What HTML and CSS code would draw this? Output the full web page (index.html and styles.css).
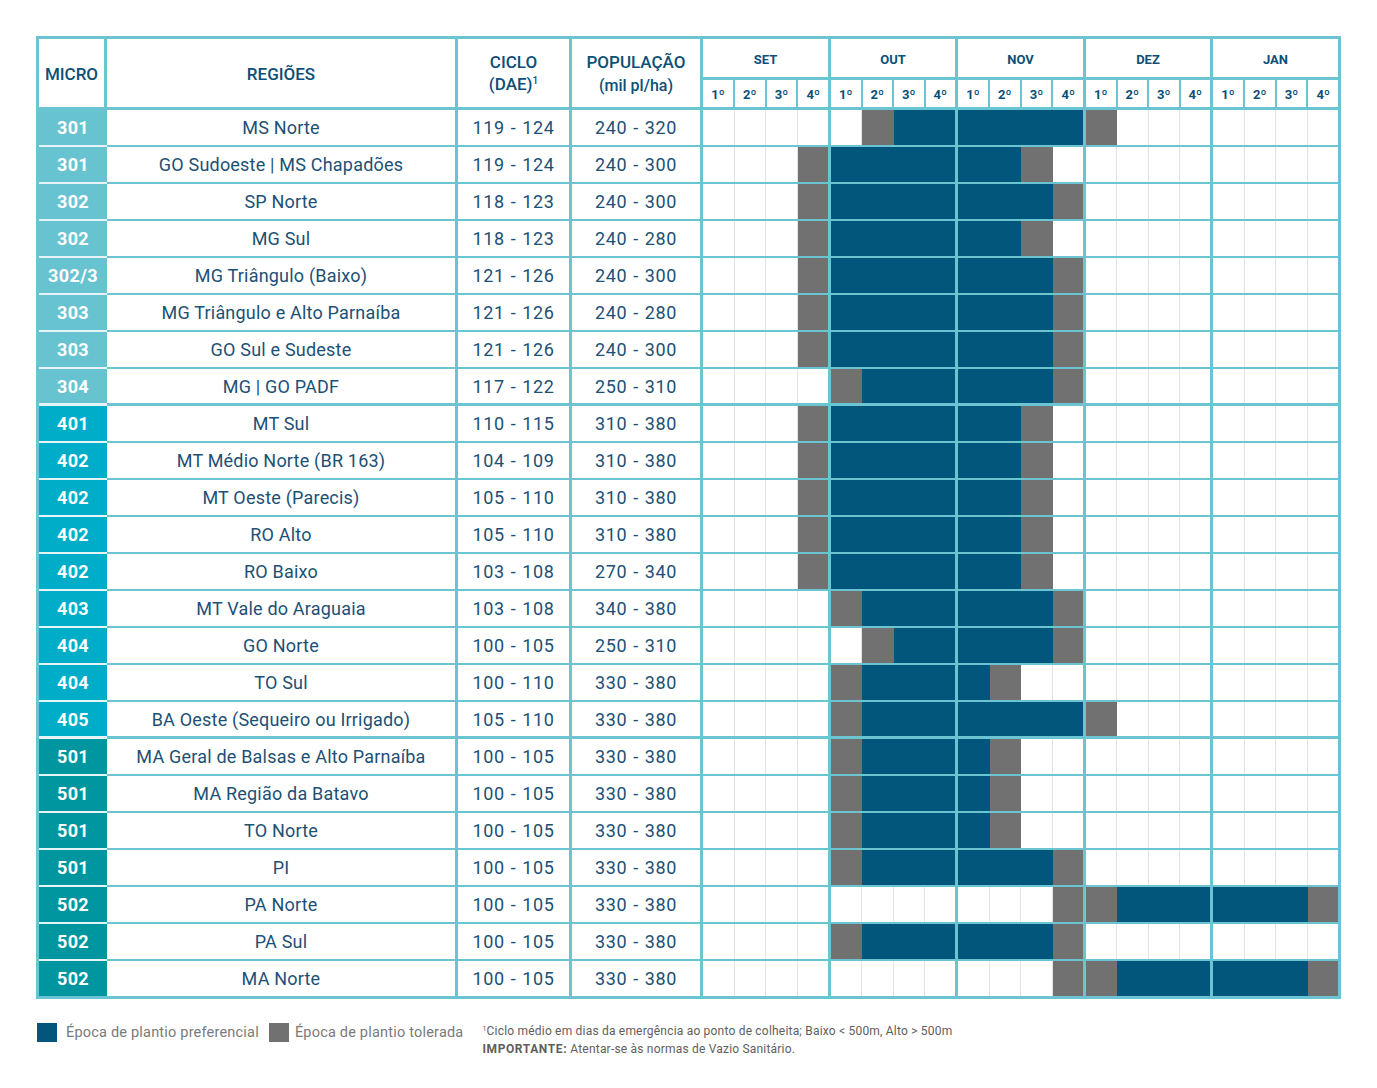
FILE: index.html
```html
<!DOCTYPE html>
<html lang="pt-BR">
<head>
<meta charset="utf-8">
<title>Época de plantio</title>
<link rel="stylesheet" href="styles.css">
</head>
<body>
<div class="page">
  <div class="tbl">
    <div class="head">
      <div class="c micro hc">MICRO</div>
      <div class="c reg hc">REGIÕES</div>
      <div class="c cic hc two"><span>CICLO</span><span>(DAE)<sup>1</sup></span></div>
      <div class="c pop hc two"><span>POPULAÇÃO</span><span class="sub">(mil pl/ha)</span></div>
      <div class="hm"><div class="mn">SET</div><div class="wk"><b>1º</b><b>2º</b><b>3º</b><b>4º</b></div></div>
      <div class="hm"><div class="mn">OUT</div><div class="wk"><b>1º</b><b>2º</b><b>3º</b><b>4º</b></div></div>
      <div class="hm"><div class="mn">NOV</div><div class="wk"><b>1º</b><b>2º</b><b>3º</b><b>4º</b></div></div>
      <div class="hm"><div class="mn">DEZ</div><div class="wk"><b>1º</b><b>2º</b><b>3º</b><b>4º</b></div></div>
      <div class="hm"><div class="mn">JAN</div><div class="wk"><b>1º</b><b>2º</b><b>3º</b><b>4º</b></div></div>
    </div>

    <div class="row g3">
      <div class="c micro">301</div><div class="c reg">MS Norte</div><div class="c cic">119 - 124</div><div class="c pop">240 - 320</div>
      <div class="m"><i></i><i></i><i></i><i></i></div>
      <div class="m"><i></i><i class="g"></i><i class="n"></i><i class="n"></i></div>
      <div class="m"><i class="n"></i><i class="n"></i><i class="n"></i><i class="n"></i></div>
      <div class="m"><i class="g"></i><i></i><i></i><i></i></div>
      <div class="m"><i></i><i></i><i></i><i></i></div>
    </div>
    <div class="row g3">
      <div class="c micro">301</div><div class="c reg">GO Sudoeste | MS Chapadões</div><div class="c cic">119 - 124</div><div class="c pop">240 - 300</div>
      <div class="m"><i></i><i></i><i></i><i class="g"></i></div>
      <div class="m"><i class="n"></i><i class="n"></i><i class="n"></i><i class="n"></i></div>
      <div class="m"><i class="n"></i><i class="n"></i><i class="g"></i><i></i></div>
      <div class="m"><i></i><i></i><i></i><i></i></div>
      <div class="m"><i></i><i></i><i></i><i></i></div>
    </div>
    <div class="row g3">
      <div class="c micro">302</div><div class="c reg">SP Norte</div><div class="c cic">118 - 123</div><div class="c pop">240 - 300</div>
      <div class="m"><i></i><i></i><i></i><i class="g"></i></div>
      <div class="m"><i class="n"></i><i class="n"></i><i class="n"></i><i class="n"></i></div>
      <div class="m"><i class="n"></i><i class="n"></i><i class="n"></i><i class="g"></i></div>
      <div class="m"><i></i><i></i><i></i><i></i></div>
      <div class="m"><i></i><i></i><i></i><i></i></div>
    </div>
    <div class="row g3">
      <div class="c micro">302</div><div class="c reg">MG Sul</div><div class="c cic">118 - 123</div><div class="c pop">240 - 280</div>
      <div class="m"><i></i><i></i><i></i><i class="g"></i></div>
      <div class="m"><i class="n"></i><i class="n"></i><i class="n"></i><i class="n"></i></div>
      <div class="m"><i class="n"></i><i class="n"></i><i class="g"></i><i></i></div>
      <div class="m"><i></i><i></i><i></i><i></i></div>
      <div class="m"><i></i><i></i><i></i><i></i></div>
    </div>
    <div class="row g3">
      <div class="c micro">302/3</div><div class="c reg">MG Triângulo (Baixo)</div><div class="c cic">121 - 126</div><div class="c pop">240 - 300</div>
      <div class="m"><i></i><i></i><i></i><i class="g"></i></div>
      <div class="m"><i class="n"></i><i class="n"></i><i class="n"></i><i class="n"></i></div>
      <div class="m"><i class="n"></i><i class="n"></i><i class="n"></i><i class="g"></i></div>
      <div class="m"><i></i><i></i><i></i><i></i></div>
      <div class="m"><i></i><i></i><i></i><i></i></div>
    </div>
    <div class="row g3">
      <div class="c micro">303</div><div class="c reg">MG Triângulo e Alto Parnaíba</div><div class="c cic">121 - 126</div><div class="c pop">240 - 280</div>
      <div class="m"><i></i><i></i><i></i><i class="g"></i></div>
      <div class="m"><i class="n"></i><i class="n"></i><i class="n"></i><i class="n"></i></div>
      <div class="m"><i class="n"></i><i class="n"></i><i class="n"></i><i class="g"></i></div>
      <div class="m"><i></i><i></i><i></i><i></i></div>
      <div class="m"><i></i><i></i><i></i><i></i></div>
    </div>
    <div class="row g3">
      <div class="c micro">303</div><div class="c reg">GO Sul e Sudeste</div><div class="c cic">121 - 126</div><div class="c pop">240 - 300</div>
      <div class="m"><i></i><i></i><i></i><i class="g"></i></div>
      <div class="m"><i class="n"></i><i class="n"></i><i class="n"></i><i class="n"></i></div>
      <div class="m"><i class="n"></i><i class="n"></i><i class="n"></i><i class="g"></i></div>
      <div class="m"><i></i><i></i><i></i><i></i></div>
      <div class="m"><i></i><i></i><i></i><i></i></div>
    </div>
    <div class="row g3 ge">
      <div class="c micro">304</div><div class="c reg">MG | GO PADF</div><div class="c cic">117 - 122</div><div class="c pop">250 - 310</div>
      <div class="m"><i></i><i></i><i></i><i></i></div>
      <div class="m"><i class="g"></i><i class="n"></i><i class="n"></i><i class="n"></i></div>
      <div class="m"><i class="n"></i><i class="n"></i><i class="n"></i><i class="g"></i></div>
      <div class="m"><i></i><i></i><i></i><i></i></div>
      <div class="m"><i></i><i></i><i></i><i></i></div>
    </div>

    <div class="row g4">
      <div class="c micro">401</div><div class="c reg">MT Sul</div><div class="c cic">110 - 115</div><div class="c pop">310 - 380</div>
      <div class="m"><i></i><i></i><i></i><i class="g"></i></div>
      <div class="m"><i class="n"></i><i class="n"></i><i class="n"></i><i class="n"></i></div>
      <div class="m"><i class="n"></i><i class="n"></i><i class="g"></i><i></i></div>
      <div class="m"><i></i><i></i><i></i><i></i></div>
      <div class="m"><i></i><i></i><i></i><i></i></div>
    </div>
    <div class="row g4">
      <div class="c micro">402</div><div class="c reg">MT Médio Norte (BR 163)</div><div class="c cic">104 - 109</div><div class="c pop">310 - 380</div>
      <div class="m"><i></i><i></i><i></i><i class="g"></i></div>
      <div class="m"><i class="n"></i><i class="n"></i><i class="n"></i><i class="n"></i></div>
      <div class="m"><i class="n"></i><i class="n"></i><i class="g"></i><i></i></div>
      <div class="m"><i></i><i></i><i></i><i></i></div>
      <div class="m"><i></i><i></i><i></i><i></i></div>
    </div>
    <div class="row g4">
      <div class="c micro">402</div><div class="c reg">MT Oeste (Parecis)</div><div class="c cic">105 - 110</div><div class="c pop">310 - 380</div>
      <div class="m"><i></i><i></i><i></i><i class="g"></i></div>
      <div class="m"><i class="n"></i><i class="n"></i><i class="n"></i><i class="n"></i></div>
      <div class="m"><i class="n"></i><i class="n"></i><i class="g"></i><i></i></div>
      <div class="m"><i></i><i></i><i></i><i></i></div>
      <div class="m"><i></i><i></i><i></i><i></i></div>
    </div>
    <div class="row g4">
      <div class="c micro">402</div><div class="c reg">RO Alto</div><div class="c cic">105 - 110</div><div class="c pop">310 - 380</div>
      <div class="m"><i></i><i></i><i></i><i class="g"></i></div>
      <div class="m"><i class="n"></i><i class="n"></i><i class="n"></i><i class="n"></i></div>
      <div class="m"><i class="n"></i><i class="n"></i><i class="g"></i><i></i></div>
      <div class="m"><i></i><i></i><i></i><i></i></div>
      <div class="m"><i></i><i></i><i></i><i></i></div>
    </div>
    <div class="row g4">
      <div class="c micro">402</div><div class="c reg">RO Baixo</div><div class="c cic">103 - 108</div><div class="c pop">270 - 340</div>
      <div class="m"><i></i><i></i><i></i><i class="g"></i></div>
      <div class="m"><i class="n"></i><i class="n"></i><i class="n"></i><i class="n"></i></div>
      <div class="m"><i class="n"></i><i class="n"></i><i class="g"></i><i></i></div>
      <div class="m"><i></i><i></i><i></i><i></i></div>
      <div class="m"><i></i><i></i><i></i><i></i></div>
    </div>
    <div class="row g4">
      <div class="c micro">403</div><div class="c reg">MT Vale do Araguaia</div><div class="c cic">103 - 108</div><div class="c pop">340 - 380</div>
      <div class="m"><i></i><i></i><i></i><i></i></div>
      <div class="m"><i class="g"></i><i class="n"></i><i class="n"></i><i class="n"></i></div>
      <div class="m"><i class="n"></i><i class="n"></i><i class="n"></i><i class="g"></i></div>
      <div class="m"><i></i><i></i><i></i><i></i></div>
      <div class="m"><i></i><i></i><i></i><i></i></div>
    </div>
    <div class="row g4">
      <div class="c micro">404</div><div class="c reg">GO Norte</div><div class="c cic">100 - 105</div><div class="c pop">250 - 310</div>
      <div class="m"><i></i><i></i><i></i><i></i></div>
      <div class="m"><i></i><i class="g"></i><i class="n"></i><i class="n"></i></div>
      <div class="m"><i class="n"></i><i class="n"></i><i class="n"></i><i class="g"></i></div>
      <div class="m"><i></i><i></i><i></i><i></i></div>
      <div class="m"><i></i><i></i><i></i><i></i></div>
    </div>
    <div class="row g4">
      <div class="c micro">404</div><div class="c reg">TO Sul</div><div class="c cic">100 - 110</div><div class="c pop">330 - 380</div>
      <div class="m"><i></i><i></i><i></i><i></i></div>
      <div class="m"><i class="g"></i><i class="n"></i><i class="n"></i><i class="n"></i></div>
      <div class="m"><i class="n"></i><i class="g"></i><i></i><i></i></div>
      <div class="m"><i></i><i></i><i></i><i></i></div>
      <div class="m"><i></i><i></i><i></i><i></i></div>
    </div>
    <div class="row g4 ge">
      <div class="c micro">405</div><div class="c reg">BA Oeste (Sequeiro ou Irrigado)</div><div class="c cic">105 - 110</div><div class="c pop">330 - 380</div>
      <div class="m"><i></i><i></i><i></i><i></i></div>
      <div class="m"><i class="g"></i><i class="n"></i><i class="n"></i><i class="n"></i></div>
      <div class="m"><i class="n"></i><i class="n"></i><i class="n"></i><i class="n"></i></div>
      <div class="m"><i class="g"></i><i></i><i></i><i></i></div>
      <div class="m"><i></i><i></i><i></i><i></i></div>
    </div>

    <div class="row g5">
      <div class="c micro">501</div><div class="c reg">MA Geral de Balsas e Alto Parnaíba</div><div class="c cic">100 - 105</div><div class="c pop">330 - 380</div>
      <div class="m"><i></i><i></i><i></i><i></i></div>
      <div class="m"><i class="g"></i><i class="n"></i><i class="n"></i><i class="n"></i></div>
      <div class="m"><i class="n"></i><i class="g"></i><i></i><i></i></div>
      <div class="m"><i></i><i></i><i></i><i></i></div>
      <div class="m"><i></i><i></i><i></i><i></i></div>
    </div>
    <div class="row g5">
      <div class="c micro">501</div><div class="c reg">MA Região da Batavo</div><div class="c cic">100 - 105</div><div class="c pop">330 - 380</div>
      <div class="m"><i></i><i></i><i></i><i></i></div>
      <div class="m"><i class="g"></i><i class="n"></i><i class="n"></i><i class="n"></i></div>
      <div class="m"><i class="n"></i><i class="g"></i><i></i><i></i></div>
      <div class="m"><i></i><i></i><i></i><i></i></div>
      <div class="m"><i></i><i></i><i></i><i></i></div>
    </div>
    <div class="row g5">
      <div class="c micro">501</div><div class="c reg">TO Norte</div><div class="c cic">100 - 105</div><div class="c pop">330 - 380</div>
      <div class="m"><i></i><i></i><i></i><i></i></div>
      <div class="m"><i class="g"></i><i class="n"></i><i class="n"></i><i class="n"></i></div>
      <div class="m"><i class="n"></i><i class="g"></i><i></i><i></i></div>
      <div class="m"><i></i><i></i><i></i><i></i></div>
      <div class="m"><i></i><i></i><i></i><i></i></div>
    </div>
    <div class="row g5">
      <div class="c micro">501</div><div class="c reg">PI</div><div class="c cic">100 - 105</div><div class="c pop">330 - 380</div>
      <div class="m"><i></i><i></i><i></i><i></i></div>
      <div class="m"><i class="g"></i><i class="n"></i><i class="n"></i><i class="n"></i></div>
      <div class="m"><i class="n"></i><i class="n"></i><i class="n"></i><i class="g"></i></div>
      <div class="m"><i></i><i></i><i></i><i></i></div>
      <div class="m"><i></i><i></i><i></i><i></i></div>
    </div>
    <div class="row g5">
      <div class="c micro">502</div><div class="c reg">PA Norte</div><div class="c cic">100 - 105</div><div class="c pop">330 - 380</div>
      <div class="m"><i></i><i></i><i></i><i></i></div>
      <div class="m"><i></i><i></i><i></i><i></i></div>
      <div class="m"><i></i><i></i><i></i><i class="g"></i></div>
      <div class="m"><i class="g"></i><i class="n"></i><i class="n"></i><i class="n"></i></div>
      <div class="m"><i class="n"></i><i class="n"></i><i class="n"></i><i class="g"></i></div>
    </div>
    <div class="row g5">
      <div class="c micro">502</div><div class="c reg">PA Sul</div><div class="c cic">100 - 105</div><div class="c pop">330 - 380</div>
      <div class="m"><i></i><i></i><i></i><i></i></div>
      <div class="m"><i class="g"></i><i class="n"></i><i class="n"></i><i class="n"></i></div>
      <div class="m"><i class="n"></i><i class="n"></i><i class="n"></i><i class="g"></i></div>
      <div class="m"><i></i><i></i><i></i><i></i></div>
      <div class="m"><i></i><i></i><i></i><i></i></div>
    </div>
    <div class="row g5">
      <div class="c micro">502</div><div class="c reg">MA Norte</div><div class="c cic">100 - 105</div><div class="c pop">330 - 380</div>
      <div class="m"><i></i><i></i><i></i><i></i></div>
      <div class="m"><i></i><i></i><i></i><i></i></div>
      <div class="m"><i></i><i></i><i></i><i class="g"></i></div>
      <div class="m"><i class="g"></i><i class="n"></i><i class="n"></i><i class="n"></i></div>
      <div class="m"><i class="n"></i><i class="n"></i><i class="n"></i><i class="g"></i></div>
    </div>
  </div>

  <div class="foot">
    <div class="legend">
      <span class="sw sw-n"></span><span class="lt">Época de plantio preferencial</span>
      <span class="sw sw-g"></span><span class="lt">Época de plantio tolerada</span>
    </div>
    <div class="note">
      <p><sup>1</sup>Ciclo médio em dias da emergência ao ponto de colheita; Baixo &lt; 500m, Alto &gt; 500m</p>
      <p><strong>IMPORTANTE:</strong> Atentar-se às normas de Vazio Sanitário.</p>
    </div>
  </div>
</div>
</body>
</html>
```

FILE: styles.css
```css
* { box-sizing: border-box; }

body {
  margin: 0;
  background: #fff;
  font-family: Roboto, "Liberation Sans", sans-serif;
  color: #1d5075;
}

.page {
  padding: 36px 0 0 36px;
}

.tbl {
  width: 1305px;
  border: 3px solid #6bc4d2;
}

/* ---------- header ---------- */
.head {
  display: flex;
  height: 71px;
}

.head > * {
  border-bottom: 3px solid #6bc4d2;
}

.c {
  display: flex;
  align-items: center;
  justify-content: center;
  border-right: 3px solid #6bc4d2;
  white-space: nowrap;
}

.micro { width: 68px; }
.reg   { width: 351px; }
.cic   { width: 114px; }
.pop   { width: 131px; }

.hc {
  color: #0c4f77;
  font-weight: 500;
  font-size: 17px;
  padding-top: 1px;
}

.hc.two {
  flex-direction: column;
  line-height: 22px;
  padding-top: 2px;
}

.hc sup {
  font-size: 10px;
  vertical-align: 0;
  position: relative;
  top: -6px;
}

.hc .sub {
  font-weight: 500;
  font-size: 16px;
  margin-top: 2px;
}

.hm, .m {
  width: 128px;
  border-right: 3px solid #6bc4d2;
  display: flex;
}

.head > :nth-child(6), .row > :nth-child(6),
.head > :nth-child(8), .row > :nth-child(8) { width: 127px; }

.head > :nth-child(9), .row > :nth-child(9) {
  flex: 1;
  border-right: 0;
}

.hm {
  flex-direction: column;
}

.mn {
  height: 41px;
  border-bottom: 3px solid #6bc4d2;
  display: flex;
  align-items: center;
  justify-content: center;
  font-size: 13px;
  font-weight: 700;
  color: #0c4f77;
  padding-top: 3px;
}

.wk {
  flex: 1;
  display: flex;
}

.wk b {
  flex: 1 1 0;
  display: flex;
  align-items: center;
  justify-content: center;
  font-size: 13px;
  font-weight: 700;
  color: #0c4f77;
  border-right: 2px solid #6bc4d2;
  padding-top: 1px;
}

.wk b:last-child { border-right: 0; }

/* ---------- data rows ---------- */
.row {
  display: flex;
  height: 37px;
}

.row > * {
  border-bottom: 2px solid #6bc4d2;
}

.row.ge > * { border-bottom-width: 3px; }

.row:last-child { height: 35px; }
.row:last-child > * { border-bottom: 0; }

.row .c {
  font-size: 18px;
  font-weight: 400;
  color: #1d5075;
  letter-spacing: 0.2px;
}

.row .cic, .row .pop {
  letter-spacing: 0.6px;
  word-spacing: 1px;
}

.row .micro {
  color: #fff;
  font-weight: 700;
  font-size: 18px;
  letter-spacing: 0.4px;
  border-right: 0;
  border-bottom-color: #e4f4f7;
}

.g3 .micro { background: #68c3d1; }
.g4 .micro { background: #00adc9; }
.g5 .micro { background: #00969f; }

.m i {
  flex: 1 1 0;
  border-right: 1px solid #e3e3e3;
}

.m i:last-child { border-right: 0; }

.m i.n { background: #02557b; border-right-color: #02557b; }
.m i.g { background: #717171; border-right-color: #717171; }

/* ---------- footer ---------- */
.foot {
  display: flex;
  align-items: flex-start;
  margin-top: 24px;
  width: 1305px;
}

.legend {
  display: flex;
  align-items: center;
  height: 19px;
  margin-left: 1px;
}

.sw {
  width: 20px;
  height: 19px;
  display: inline-block;
}

.sw-n { background: #02557b; }
.sw-g { background: #717171; margin-left: 10px; }

.lt {
  font-size: 14.5px;
  color: #7a7a7a;
  margin-left: 9px;
  letter-spacing: 0.2px;
}

.sw-g + .lt { margin-left: 6px; }

.note {
  margin-left: 19px;
  margin-top: 0;
  font-size: 12px;
  color: #5e5e5e;
  line-height: 16px;
  letter-spacing: 0.2px;
}

.note p { margin: 0; }

.note sup {
  font-size: 7px;
  vertical-align: 0;
  position: relative;
  top: -4px;
}

.note strong {
  font-weight: 700;
  letter-spacing: 0.6px;
}
```
